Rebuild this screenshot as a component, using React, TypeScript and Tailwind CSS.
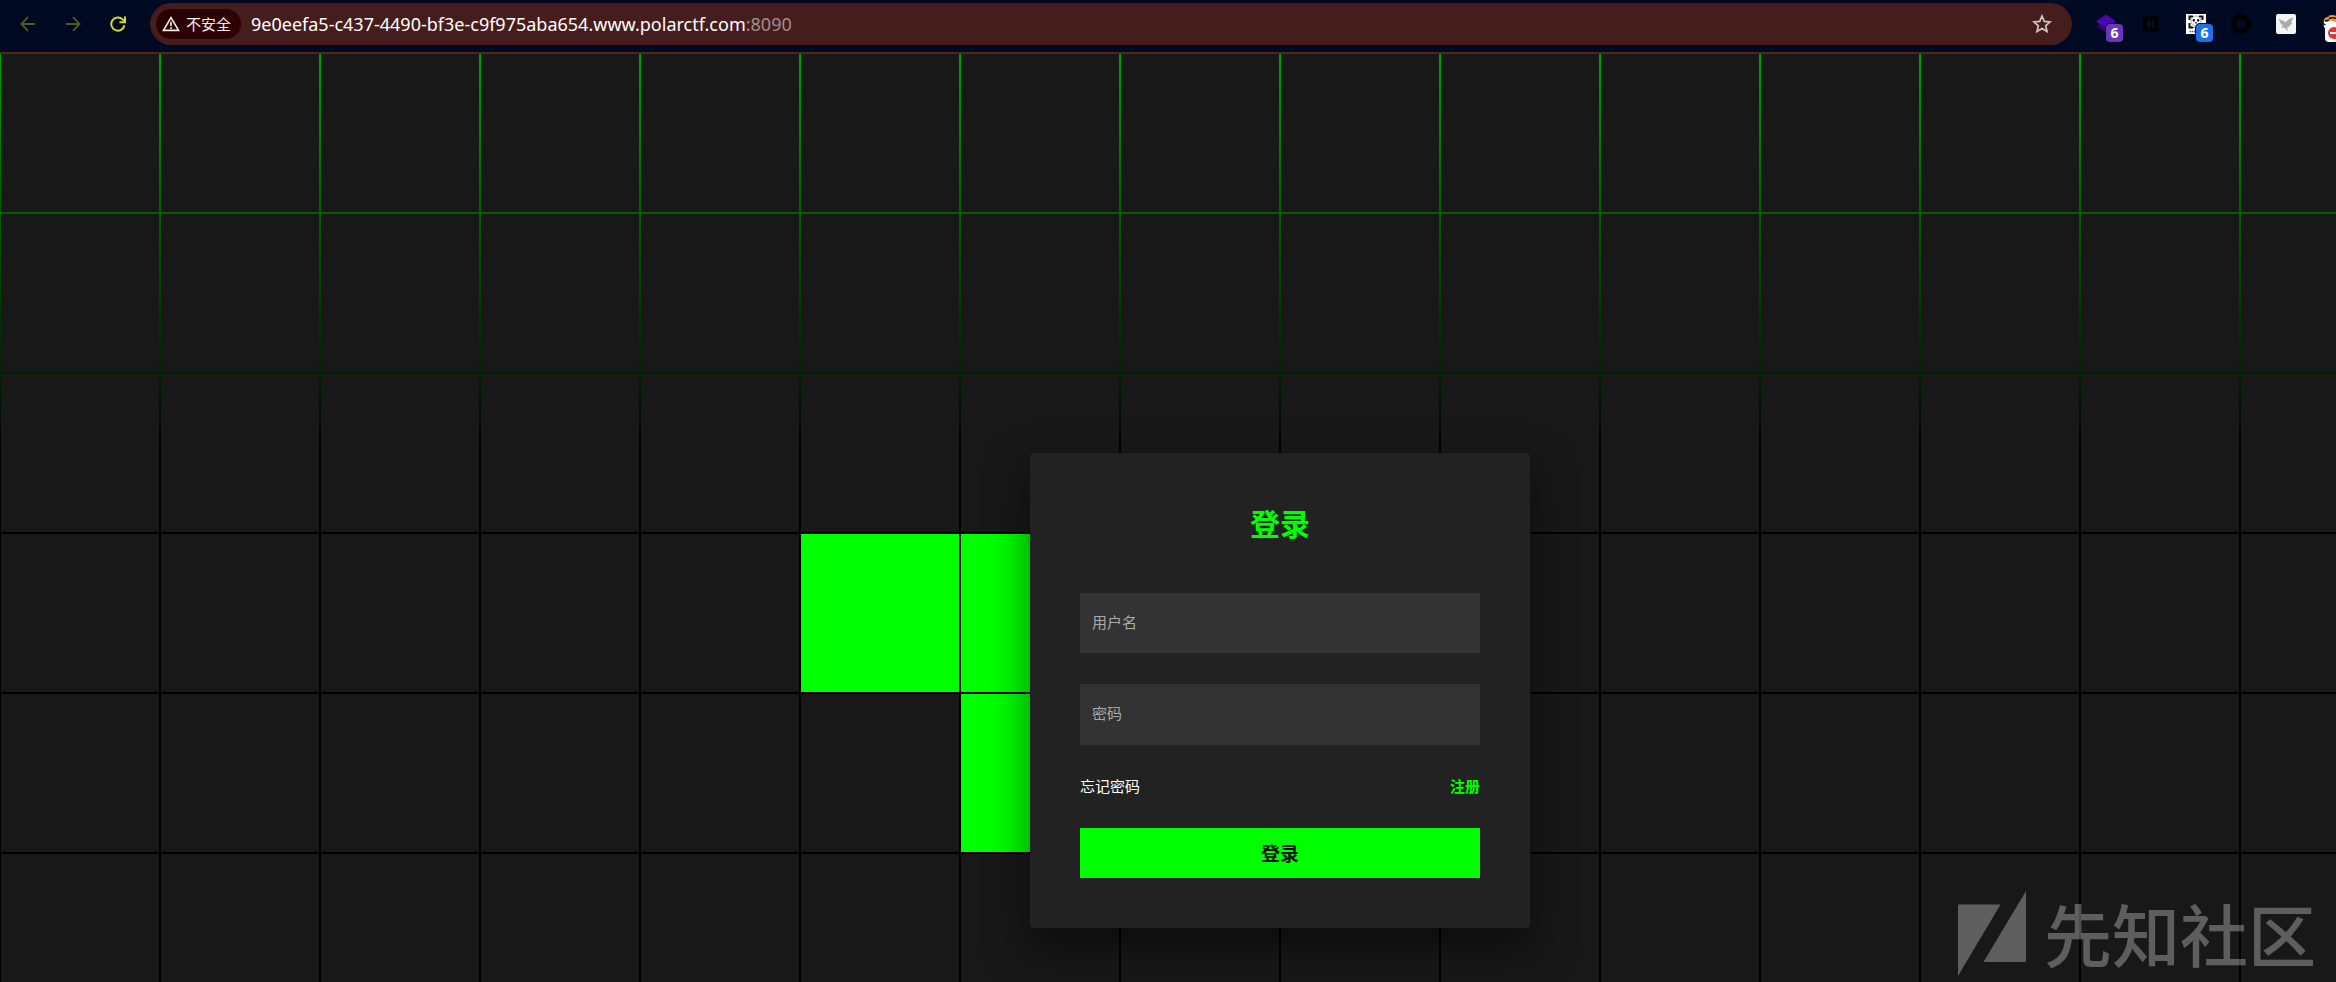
import React from "react";

const COLUMNS = 15;
const ROWS = 6;
const LIT_CELLS = [50, 51, 66];

function BackIcon() {
  return (
    <svg viewBox="0 0 16 16" className="h-4 w-4" fill="none" stroke="currentColor" strokeWidth="1.8">
      <path d="M15 8H1.6M8 1.2 1.4 8 8 14.8" />
    </svg>
  );
}

function ForwardIcon() {
  return (
    <svg viewBox="0 0 16 16" className="h-4 w-4" fill="none" stroke="currentColor" strokeWidth="1.8">
      <path d="M1 8h13.4M8 1.2 14.6 8 8 14.8" />
    </svg>
  );
}

function ReloadIcon() {
  return (
    <svg viewBox="0 0 16 16" className="h-4 w-4" fill="none" stroke="currentColor" strokeWidth="2">
      <path d="M14.4 9.2A6.6 6.6 0 1 1 12.6 3.4L14.6 5.4" />
      <path d="M15 .6V6.2H9.4" />
    </svg>
  );
}

function WarningIcon() {
  return (
    <svg viewBox="0 0 18 16" className="h-4 w-[18px]" fill="none" stroke="currentColor">
      <path d="M9 1.6 16.6 14.4H1.4Z" strokeWidth="1.6" />
      <path d="M9 5.8v4.4M9 11.2v1.8" strokeWidth="1.6" />
    </svg>
  );
}

function StarIcon() {
  return (
    <svg viewBox="0 0 20 20" className="h-5 w-5" fill="none" stroke="currentColor" strokeWidth="1.7">
      <path d="M10 2 12.3 7.4 18.1 7.9 13.7 11.8 15 17.5 10 14.5 5 17.5 6.3 11.8 1.9 7.9 7.7 7.4Z" />
    </svg>
  );
}

function LayersIcon() {
  return (
    <svg viewBox="0 0 20 20" className="h-5 w-5">
      <path d="M0 12.500 10 6 20 12.500 10 18.500Z" fill="#2a0873" />
      <path d="M0 7.500 10 .5 20 7.500 10 14.500Z" fill="#4a08b0" />
    </svg>
  );
}

function SquareIcon() {
  return (
    <svg viewBox="0 0 20 20" className="h-5 w-5">
      <rect x="2" y="2.500" width="15" height="15" rx="1.500" fill="#000" />
      <path d="M7.500 6v8M12 6v8M7.500 10H12" stroke="#0a1426" strokeWidth="1.600" />
    </svg>
  );
}

function PandaIcon() {
  return (
    <svg viewBox="0 0 20 20" className="h-5 w-5">
      <rect width="20" height="20" fill="#fff" />
      <path d="M3.500 6V2.500H7M13 2.500h3.500V6M3.500 9v4.500H7" fill="none" stroke="#111" strokeWidth="2" />
      <circle cx="10" cy="7" r="5" fill="#fff" stroke="#777" strokeWidth=".6" />
      <ellipse cx="7.800" cy="6.300" rx="1.100" ry="1.400" fill="#000" />
      <ellipse cx="12.200" cy="6.300" rx="1.100" ry="1.400" fill="#000" />
      <path d="M9 8.800h2" stroke="#000" strokeWidth="1" />
      <path d="M5 12.500q5 2.500 10 0v1.500H5Z" fill="#000" />
      <path d="M3.500 17.500h7" stroke="#666" strokeWidth="1.400" strokeDasharray="1.500 .6" />
    </svg>
  );
}

function RingIcon() {
  return (
    <svg viewBox="0 0 20 20" className="h-5 w-5">
      <circle cx="10" cy="10" r="7.500" fill="none" stroke="#000" strokeWidth="5" />
    </svg>
  );
}

function BirdIcon() {
  return (
    <svg viewBox="0 0 20 20" className="h-5 w-5">
      <rect width="20" height="20" rx="2" fill="#f4f4f4" />
      <path
        d="M3 5 10 8Q13 4 17.500 3.500L15 8Q17.500 9 15 10 14 13 11 13.200L12 17 8.500 13.800 5 13.200 7 11.500Q3.500 9 3 5Z"
        fill="#ababab"
      />
    </svg>
  );
}

function TigerIcon() {
  return (
    <svg viewBox="0 0 20 20" className="h-5 w-5">
      <circle cx="10.500" cy="10" r="8" fill="#fff" />
      <path d="M2.500 7Q4 1 11 1T19 7L14 8 10 6.500 6 8Z" fill="#f0983a" />
      <path d="M0 8 4.500 11M4 3 8 1.500M8 4.500Q12 3 16 4.500M4 7 8 6" stroke="#111" strokeWidth="1.400" fill="none" />
    </svg>
  );
}

type ExtensionProps = {
  label: string;
  badge?: string;
  badgeClass?: string;
  children: React.ReactNode;
};

function Extension({ label, badge, badgeClass, children }: ExtensionProps) {
  return (
    <button type="button" aria-label={label} className="relative h-5 w-5 shrink-0">
      {children}
      {badge && (
        <span
          className={`absolute top-2.5 left-2.5 flex h-[18px] w-[17px] items-center justify-center rounded-[4px] font-['Noto_Sans',sans-serif] text-sm font-bold text-white ring-1 ring-[#000922] ${badgeClass}`}
        >
          {badge}
        </span>
      )}
    </button>
  );
}

function BrowserToolbar() {
  return (
    <header className="flex h-[54px] shrink-0 items-start overflow-hidden border-b-2 border-[#4f2b12] bg-[#000922]">
      <nav className="flex h-12 w-[150px] shrink-0 items-center gap-[29px] pl-5 text-[#54591f]">
        <button type="button" aria-label="后退">
          <BackIcon />
        </button>
        <button type="button" aria-label="前进">
          <ForwardIcon />
        </button>
        <button type="button" aria-label="重新加载" className="text-[#d6d62e]">
          <ReloadIcon />
        </button>
      </nav>
      <div className="mt-[3px] flex h-[42px] min-w-0 flex-1 items-center rounded-full bg-[#451d1d] pr-5 pl-1.5">
        <button
          type="button"
          className="flex h-[30px] w-[85px] shrink-0 items-center gap-1.5 rounded-full bg-[#2b0000] pl-1.5 text-[15px] text-[#f5eaea]"
        >
          <WarningIcon />
          不安全
        </button>
        <p className="ml-2.5 flex-1 truncate font-['Noto_Sans','Noto_Sans_CJK_SC',sans-serif] text-lg text-white">
          9e0eefa5-c437-4490-bf3e-c9f975aba654.www.polarctf.com
          <span className="text-[#a38d8d]">:8090</span>
        </p>
        <button type="button" aria-label="收藏" className="text-[#cfc4c4]">
          <StarIcon />
        </button>
      </div>
      <div className="flex h-12 w-[264px] shrink-0 items-center gap-[25px] pl-6">
        <Extension label="图层" badge="6" badgeClass="bg-[#6a35b8]">
          <LayersIcon />
        </Extension>
        <Extension label="扩展">
          <SquareIcon />
        </Extension>
        <Extension label="熊猫" badge="6" badgeClass="bg-[#1b72e8]">
          <PandaIcon />
        </Extension>
        <Extension label="圆环">
          <RingIcon />
        </Extension>
        <Extension label="飞鸟">
          <BirdIcon />
        </Extension>
        <Extension label="老虎">
          <TigerIcon />
          <span className="absolute top-2.5 left-1 flex h-[18px] w-[18px] items-center justify-center rounded-[4px] bg-white">
            <span className="flex h-3 w-3 items-center rounded-full bg-[#e5353b] px-0.5">
              <span className="h-0.5 w-full bg-white" />
            </span>
          </span>
        </Extension>
      </div>
    </header>
  );
}

function CellGrid() {
  return (
    <div
      aria-hidden="true"
      className="absolute inset-0 overflow-hidden bg-black bg-[linear-gradient(to_bottom,#00a000_0px,#000000_400px)] pl-px"
    >
      <div className="grid auto-rows-[158px] grid-cols-[repeat(15,158px)] gap-0.5">
        {Array.from({ length: COLUMNS * ROWS }, (_, i) => (
          <div key={i} className={LIT_CELLS.includes(i) ? "bg-[#00ff00]" : "bg-[#181818]"} />
        ))}
      </div>
    </div>
  );
}

function LoginCard() {
  const field =
    "block w-full bg-[#333333] px-3 pb-1 text-[15px] text-white outline-none placeholder:text-[#aaaaaa]";
  return (
    <form
      onSubmit={(e) => e.preventDefault()}
      className="relative flex w-[500px] flex-col rounded bg-[#222222] px-[50px] pt-12 pb-[50px] shadow-[0_19px_44px_rgba(0,0,0,0.5)]"
    >
      <h1 className="text-center text-3xl leading-[42px] font-bold text-[#00ff00]">登录</h1>
      <input
        type="text"
        aria-label="用户名"
        placeholder="用户名"
        className={`${field} mt-[50px] h-[60px]`}
      />
      <input
        type="password"
        aria-label="密码"
        placeholder="密码"
        className={`${field} mt-[31px] h-[61px]`}
      />
      <div className="mt-[31px] flex justify-between text-[15px] leading-5">
        <a href="#forgot" className="text-white">
          忘记密码
        </a>
        <a href="#register" className="font-bold text-[#00ff00]">
          注册
        </a>
      </div>
      <button type="submit" className="mt-8 h-[50px] bg-[#00ff00] text-[19px] font-bold text-[#111111]">
        登录
      </button>
    </form>
  );
}

function Watermark() {
  return (
    <div className="pointer-events-none absolute right-5 bottom-0 flex items-center gap-[18px] text-white opacity-30">
      <svg viewBox="0 0 68 85" className="h-[85px] w-[68px]" fill="currentColor">
        <path d="M0 13.500H42.500L0 85Z" />
        <path d="M68 0V71H25.500Z" />
      </svg>
      <span className="text-[68px] leading-[98px] font-medium">先知社区</span>
    </div>
  );
}

export default function App() {
  return (
    <div className="flex h-screen flex-col overflow-hidden bg-black font-['Noto_Sans_CJK_SC',sans-serif]">
      <BrowserToolbar />
      <main className="relative flex min-h-0 flex-1 items-start justify-center overflow-hidden pt-[399px] pl-[224px]">
        <CellGrid />
        <LoginCard />
        <Watermark />
      </main>
    </div>
  );
}
